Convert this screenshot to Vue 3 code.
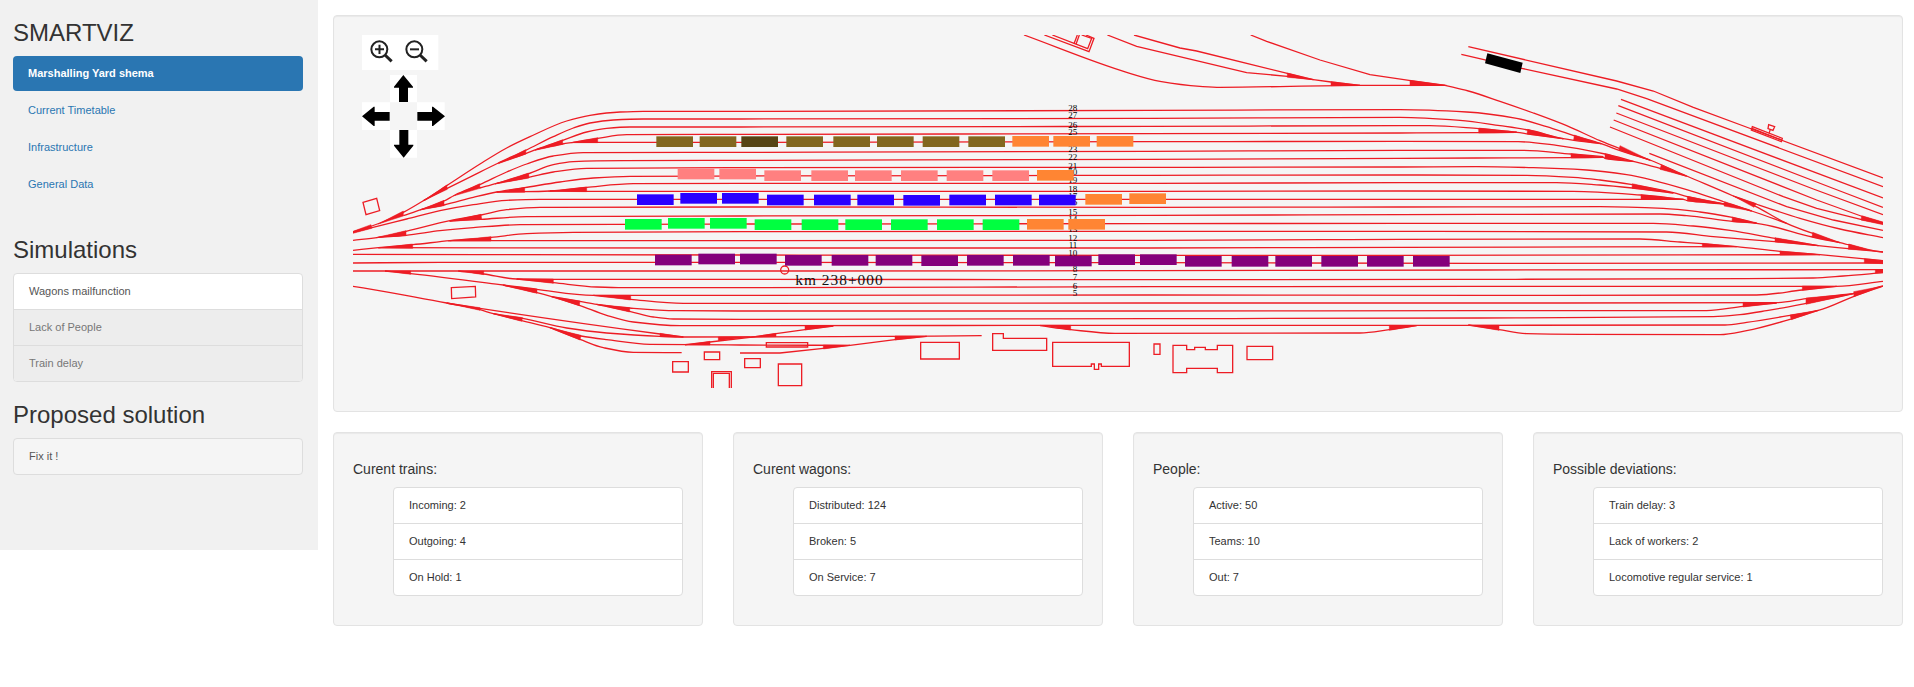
<script setup>
const nav = ['Marshalling Yard shema', 'Current Timetable', 'Infrastructure', 'General Data']
const cards = [
  { title: 'Curent trains:', rows: ['Incoming: 2', 'Outgoing: 4', 'On Hold: 1'] },
  { title: 'Curent wagons:', rows: ['Distributed: 124', 'Broken: 5', 'On Service: 7'] },
  { title: 'People:', rows: ['Active: 50', 'Teams: 10', 'Out: 7'] },
  { title: 'Possible deviations:', rows: ['Train delay: 3', 'Lack of workers: 2', 'Locomotive regular service: 1'] },
]

// Monotone cubic interpolation through points ordered by x.
function smooth(str) {
  const p = str.trim().split(/\s+/).map((s) => s.split(',').map(Number))
  const n = p.length
  const s = []
  for (let i = 0; i < n - 1; i++) s.push((p[i + 1][1] - p[i][1]) / (p[i + 1][0] - p[i][0]))
  const m = [s[0]]
  for (let i = 1; i < n - 1; i++) {
    if (s[i - 1] * s[i] <= 0) { m.push(0); continue }
    const a = p[i][0] - p[i - 1][0]
    const b = p[i + 1][0] - p[i][0]
    m.push((3 * (a + b)) / ((2 * b + a) / s[i - 1] + (b + 2 * a) / s[i]))
  }
  m.push(s[n - 2])
  let d = `M${p[0][0]} ${p[0][1]}`
  for (let i = 0; i < n - 1; i++) {
    const h = (p[i + 1][0] - p[i][0]) / 3
    d += `C${p[i][0] + h} ${p[i][1] + m[i] * h} ${p[i + 1][0] - h} ${p[i + 1][1] - m[i + 1] * h} ${p[i + 1][0]} ${p[i + 1][1]}`
  }
  return d
}

const curved = [
  // upper sorting tracks, 28 down to 17
  '39,426 120,399 190,367 252,331 320,287 420,222 500,174 570,140 680,93 750,76 840,66 910,64 1200,64 2430,61 3180,59 3380,66 3530,85 3620,110 3702,137 3784,161 3840,182 3930,210',
  '252,331 320,296 400,256 475,219 557,181 640,140 700,114 750,99 820,90 910,87 1200,87 2430,85 3180,82 3360,91 3480,107 3565,120 3670,146 3702,151 3784,161',
  '475,219 557,191 590,178 668,151 740,126 800,115 870,111 1200,111 2430,109 3180,107 3270,107 3416,116 3530,126',
  '590,178 668,162 700,157 773,145 860,134 1200,133 2430,131 3180,129 3416,128 3530,127 3565,132 3670,146',
  '700,157 1200,157 2430,155 3180,154 3535,155 3650,166 3795,192 3880,214 3963,236 4040,258',
  '190,377 245,358 312,333 345,315 419,284 500,246 560,222 640,198 730,188 1200,187 2430,184 3180,181 3550,181 3693,192 3790,200',
  '419,294 470,280 566,251 640,224 700,215 850,212 1200,211 2430,208 3180,205 3410,204 3693,203 3790,202 3795,205 3880,214',
  '470,280 566,262 640,246 740,235 1200,233 2430,232 3180,231 3410,230 3580,233 3740,240 3860,254 3940,271 4040,299 4153,336 4235,363 4340,400',
  '245,358 312,345 400,322 470,306 554,293 660,276 760,264 870,259 1200,258 2430,256 3180,255 3560,256 3700,262 3780,270 3877,284 4000,308 4042,320 4160,343',
  '470,306 554,305 630,303 740,292 880,281 1200,280 2430,280 3180,278 3650,278 3780,285 3877,294 4000,309',
  '630,303 740,304 1200,304 2430,304 3180,303 3700,304 3903,315 4030,328',
  '39,427 96,413 200,387 300,362 400,344 500,331 600,328 1200,328 2430,328 3180,328 4030,328 4042,332 4160,343 4235,363',
  // middle fans
  '39,451 115,442 198,424 330,392 423,375 500,359 600,352 1200,351 2430,352 3180,351 3780,350 3970,355 4080,366 4177,382 4250,399',
  '330,393 423,388 560,380 1200,378 2430,376 3180,374 3960,372 4040,377 4177,394 4250,400 4417,441 4500,458',
  '115,442 198,436 300,422 400,413 540,404 1200,402 2430,401 3180,400 3940,400 4060,408 4170,421 4305,445 4435,467',
  '39,481 115,473 218,464 330,452 453,442 560,431 700,427 1200,425 2430,424 3180,424 3980,426 4120,440 4305,455 4435,467 4525,476 4629,486',
  '330,452 1200,452 2430,451 2950,449 3180,448 3900,447 4020,456 4087,461 4190,470 4320,484 4440,494 4629,512',
  '115,473 1200,474 2430,474 3180,472 4190,470',
  '39,493 1200,495 2430,496 3180,496 4440,494',
  '39,519 300,517 1200,517 2430,518 3420,520 4629,519',
  '39,543 1200,543 2430,542 3420,540 4629,539',
  '355,543 431,552 530,567 640,568 1200,568 2430,569 3420,568 4220,566 4420,564 4510,558 4629,548',
  '530,567 640,578 770,591 850,593 1200,593 2430,590 3420,589 4490,589 4629,574',
  '135,543 212,551 490,585 591,598 760,616 872,616 1200,616 2430,615 3420,616 4250,615 4387,600 4490,589',
  '760,616 872,628 1030,640 1200,640 2430,639 3420,639 4310,638 4398,626 4540,611',
  '635,620 720,634 770,643 869,654 1010,662 1200,663 2430,663 3420,662 4100,662 4209,649 4310,639',
  '770,643 869,664 940,681 1000,687 1200,688 2430,686 3420,684 4120,680 4200,674 4280,662 4398,640 4540,611 4629,588',
  '490,585 591,608 635,620 718,646 800,676 880,696 1020,707 1200,707 2430,706 3420,706 4155,705 4220,697 4350,676 4435,661 4542,619 4629,588',
  '2100,707 2192,719 2325,730 3060,729 3148,719 3230,707',
  '3385,705 3477,719 3560,731 3720,733 4140,734 4220,722 4350,688 4435,661',
  // south-west sidings
  '39,589 130,604 320,639 420,655 960,732 1030,741',
  '320,639 420,659 460,671 548,685 680,714 800,729 960,739 1030,741 1500,740 1925,737',
  '460,671 545,692 630,713 723,738 800,749 930,763 1200,765 1530,766',
  '630,713 720,748 790,773 880,787 1025,788',
  // northern main line
  '2052,-165 2360,-53 2460,-26 2580,-11 2640,-8 3060,-14 3315,-14',
  '3315,-14 3385,3 3480,34 3580,69 3680,107 3780,152 3840,176 3930,210 4040,258 4180,318 4248,350 4340,400 4417,430 4500,458 4525,464 4600,482 4629,486',
  '4180,318 4248,342 4380,385 4500,417 4629,443',
]

const straight = [
  '1035,764 1110,756 1230,742 1308,731 1395,719 1480,708',
  '1200,789 1320,789 1450,775 1530,766 1665,749 1760,739',
  '2302,-165 2390,-131 2720,-52 2842,-41 2920,-31 2973,-24 3060,-14',
  '2382,-165 2520,-126 2570,-117 2842,-50 2920,-31',
  '2732,-165 2780,-146 2940,-90 3090,-46 3212,-28 3315,-14',
  // parallel eastern tracks
  '3385,-130 3830,-27 3940,3 4060,52 4235,117 4629,264',
  '3364,-107 3545,-65 3830,-3 3920,26 4629,290',
  '3843,28 4629,324',
  '3835,47 4500,303 4629,352',
  '3829,69 4420,297 4629,374',
  '3821,90 4430,330 4563,378 4629,398',
  '3810,111 4330,320 4430,355 4565,389 4629,401',
  '3928,190 4340,350 4480,390 4629,421',
]

const tracks = [...curved.map(smooth), ...straight.map((s) => 'M' + s)]

const switches = [
  '39,424 93,404 95,415 39,430', '115,402 190,363 190,378', '252,331 320,286 322,298', '475,221 557,179 558,192',
  '585,181 668,149 668,163', '695,158 773,143 773,158', '240,360 312,331 312,347', '340,318 419,281 420,295',
  '465,282 566,249 567,264', '470,307 554,292 554,307', '625,304 740,291 740,305', '108,443 198,422 198,437',
  '328,394 423,373 425,388', '115,474 218,462 218,475', '325,453 453,440 453,453',
  '135,543 212,543 212,553', '355,543 431,543 431,554', '530,567 640,567 640,580', '490,586 591,597 591,610',
  '760,616 872,616 872,630', '635,620 720,633 718,647', '770,643 869,653 869,666', '320,639 420,653 420,661',
  '460,671 548,683 545,694', '630,713 723,736 720,750', '1030,741 960,730 960,740', '1035,765 1110,754 1110,765',
  '1230,740 1135,741 1135,752', '1230,742 1308,730 1308,740', '1480,708 1395,707 1395,720',
  '1530,766 1450,765 1450,777', '1760,739 1665,738 1665,750', '2100,706 2192,706 2192,720',
  '3230,707 3148,706 3148,721', '3385,705 3477,706 3477,721',
  '2920,-31 2842,-51 2842,-38', '3060,-14 2973,-25 2973,-13', '3320,-14 3210,-29 3210,-13',
  '3530,127 3416,114 3416,129', '3670,147 3563,118 3561,132', '3784,162 3703,135 3701,150', '3932,212 3840,167 3837,180',
  '4040,259 3964,224 3960,238', '3790,202 3693,191 3693,204', '3880,215 3795,191 3795,206',
  '4000,309 3877,281 3876,295', '4030,328 3903,314 3903,328', '4160,343 4042,319 4042,333', '4235,363 4154,335 4152,348',
  '4180,318 4249,341 4242,352', '4250,400 4177,381 4176,395', '4500,458 4418,427 4416,441', '4435,467 4305,443 4305,456',
  '4600,482 4526,462 4525,478', '4190,470 4087,460 4087,471', '4440,494 4320,483 4320,495',
  '4573,506 4629,512 4629,521 4573,519', '4606,539 4629,539 4629,548 4606,549',
  '4490,589 4387,588 4387,601', '4310,639 4209,637 4209,651', '4540,611 4398,624 4398,643', '4435,661 4350,675 4354,689',
  '4625,589 4541,605 4542,620', '4629,396 4565,377 4563,390 4629,404',
]

const buildings = [
  'M69 337 110 325 119 362 78 374Z', 'M334 593 406 589 407 621 335 626Z',
  'M998 815H1045V846H998Z', 'M1093 786H1139V809H1093Z', 'M1115 894V845H1174V894', 'M1120 894V850H1168V894',
  'M1214 806H1261V833H1214Z', 'M1279 758H1403V771H1279Z', 'M1315 822H1385V887H1315Z', 'M1742 757H1858V807H1742Z',
  'M1958 731H1990V745H2120V781H1958Z',
  'M2138 757H2368V829H2284V822H2276V838H2263V822H2254V829H2138Z',
  'M2442 762H2460V793H2442Z',
  'M2499 766H2540V779H2564V772H2596V779H2632V766H2678V848H2632V835H2540V848H2499Z',
  'M2721 769H2798V809H2721Z',
  'M2113 -165 2247 -115 2262 -155 2238 -165', 'M2137 -165 2243 -124 2255 -155 2225 -165', 'M2202 -139 2212 -165', 'M2208 -137 2218 -165',
  'M4237 110 4327 145 4324 155 4234 120Z', 'M4236 115 4325 150',
  'M4286 104 4304 110 4299 121 4284 116Z', 'M4291 118 4287 130',
]

const groups = [
  ['#82671e', [[949, 139], [1079, 139], [1339, 139], [1480, 139], [1611, 139], [1748, 139], [1885, 139]]],
  ['#564414', [[1204, 139]]],
  ['#ff8080', [[1013, 236], [1138, 236], [1273, 241], [1414, 241], [1545, 241], [1683, 241], [1820, 241], [1957, 241]]],
  ['#2a00ff', [[891, 313], [1021, 309], [1146, 309], [1281, 314], [1422, 314], [1552, 314], [1690, 315], [1828, 314], [1965, 314], [2097, 314]]],
  ['#00ff40', [[855, 387], [984, 384], [1110, 384], [1244, 388], [1385, 388], [1516, 388], [1653, 388], [1791, 388], [1928, 388]]],
  ['#84007b', [[945, 494], [1075, 491], [1200, 491], [1335, 495], [1475, 495], [1607, 495], [1744, 496], [1881, 495], [2019, 495], [2145, 497], [2275, 493], [2400, 493], [2535, 498], [2675, 498], [2806, 498], [2944, 498], [3081, 498], [3219, 498]]],
  ['#ff8533', [[2017, 138], [2140, 138], [2270, 138], [2091, 240], [2236, 312], [2368, 310], [2061, 387], [2185, 387]]],
]
const wagons = groups.flatMap(([fill, list]) => list.map(([x, y]) => ({ fill, x, y })))

const labelY = [64, 85, 114, 134, 158, 186, 209, 236, 256, 279, 305, 328, 346, 375, 397, 425, 452, 475, 498, 522, 545, 570, 596, 618]
const labels = labelY.map((y, i) => ({ n: 28 - i, y }))
</script>

<template>
  <div class="page">
    <aside class="sidebar">
      <h3>SMARTVIZ</h3>
      <ul class="pills">
        <li v-for="(n, i) in nav" :key="n" :class="{ active: i === 0 }">{{ n }}</li>
      </ul>
      <h3>Simulations</h3>
      <ul class="list sims">
        <li>Wagons mailfunction</li>
        <li class="disabled">Lack of People</li>
        <li class="disabled">Train delay</li>
      </ul>
      <h3>Proposed solution</h3>
      <ul class="list fix">
        <li>Fix it !</li>
      </ul>
    </aside>

    <main class="content">
      <section class="well yard">
        <svg class="map" viewBox="39 -165 4590 1059">
          <g class="line">
            <path v-for="(d, i) in tracks" :key="'t' + i" :d="d" />
            <path v-for="(d, i) in buildings" :key="'b' + i" :d="d" />
            <circle cx="1334" cy="540" r="12" />
          </g>
          <g class="blade">
            <polygon v-for="(p, i) in switches" :key="i" :points="p" />
          </g>
          <g class="num">
            <text v-for="l in labels" :key="l.n" x="2212" :y="l.y">{{ l.n }}</text>
          </g>
          <text class="km" x="1366" y="586" textLength="262">km 238+000</text>
          <rect v-for="(w, i) in wagons" :key="'w' + i" :x="w.x" :y="w.y" width="110" height="32" :fill="w.fill" />
          <polygon points="3442,-110 3548,-82 3541,-51 3435,-80" />
          <g transform="translate(-1020 -270)">
            <rect class="tile" x="1086" y="105" width="229" height="105" />
            <g class="lens">
              <circle cx="1138" cy="148" r="24" />
              <path d="M1125 148H1152M1138.500 134V162" />
              <path class="grip" d="M1155 165 1175 184" />
              <circle cx="1243" cy="148" r="24" />
              <path d="M1230 148H1257" />
              <path class="grip" d="M1260 165 1280 184" />
            </g>
            <path class="tile" d="M1170 225h81v82h-81zM1086 307h84v83h-84zM1251 307h83v83h-83zM1170 390h81v83h-81z" />
            <path d="M1210 225 1239 260V263H1224V306H1197V263H1182V260Z" />
            <path d="M1211 473 1240 437V434H1225V390H1198V434H1182V437Z" />
            <path d="M1086 349 1121 320H1124V336H1169V362H1124V378H1121Z" />
            <path d="M1335 349 1299 320H1296V336H1252V362H1296V378H1299Z" />
          </g>
        </svg>
      </section>

      <div class="cards">
        <section v-for="c in cards" :key="c.title" class="well card">
          <h4>{{ c.title }}</h4>
          <ul class="list">
            <li v-for="r in c.rows" :key="r">{{ r }}</li>
          </ul>
        </section>
      </div>
    </main>
  </div>
</template>

<style>
body {
  margin: 0;
  background: #fff;
}
</style>

<style scoped>
* {
  box-sizing: border-box;
}
.page {
  display: flex;
  align-items: flex-start;
  font: 11px/15px "Liberation Sans", Arial, sans-serif;
  color: #333;
}
.sidebar {
  width: 318px;
  height: 550px;
  padding: 20px 15px 0 13px;
  background: #f1f1f1;
  flex: none;
}
h3, h4 {
  margin: 0 0 10px;
  font-weight: 400;
}
h3 {
  font-size: 24px;
  line-height: 26px;
}
h4 {
  font-size: 14px;
  line-height: 15px;
}
ul {
  list-style: none;
  margin: 0;
  padding: 0;
}
.pills {
  display: flex;
  flex-direction: column;
  gap: 2px;
  margin-bottom: 35px;
}
.pills li {
  padding: 10px 15px;
  border-radius: 4px;
  color: #2a76b2;
}
.pills .active {
  background: #2a76b2;
  color: #fff;
  font-weight: 700;
}
.list {
  border: 1px solid #ddd;
  border-radius: 4px;
  background: #fff;
  overflow: hidden;
}
.list li {
  padding: 10px 15px;
}
.list li + li {
  border-top: 1px solid #ddd;
}
.sims, .fix {
  margin-bottom: 20px;
  color: #555;
}
.sims .disabled {
  background: #ededed;
  color: #777;
}
.fix {
  background: #f5f5f5;
}
.content {
  width: 1570px;
  margin: 15px 0 0 15px;
  flex: none;
}
.well {
  background: #f5f5f5;
  border: 1px solid #e3e3e3;
  border-radius: 4px;
  box-shadow: inset 0 1px 1px rgba(0, 0, 0, .05);
  padding: 19px;
}
.yard {
  height: 397px;
  margin-bottom: 20px;
}
.map {
  display: block;
  width: 1530px;
  height: 353px;
}
.line {
  fill: none;
  stroke: #ed1c24;
  stroke-width: 3.9;
}
.blade {
  fill: #ed1c24;
  stroke: #ed1c24;
  stroke-width: 1.5;
}
.num {
  font: 27px "Liberation Serif", "Times New Roman", serif;
  text-anchor: end;
}
.km {
  font: 46px "Liberation Serif", "Times New Roman", serif;
  fill: #111;
}
.tile {
  fill: #fff;
}
.lens {
  fill: none;
  stroke: #222;
  stroke-width: 6;
}
.grip {
  stroke-width: 9;
}
.cards {
  display: grid;
  grid-template-columns: repeat(4, 370px);
  gap: 30px;
}
.card {
  height: 194px;
  padding-top: 29px;
}
.card .list {
  margin-left: 40px;
}
</style>
